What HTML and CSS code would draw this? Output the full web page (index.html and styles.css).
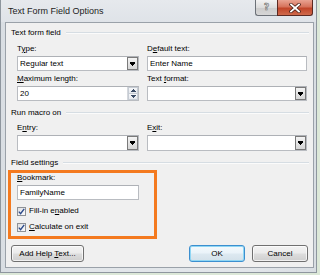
FILE: index.html
```html
<!DOCTYPE html>
<html>
<head>
<meta charset="utf-8">
<title>Text Form Field Options</title>
<link rel="stylesheet" href="styles.css">
</head>
<body>
<div class="window">
  <div class="titlebar">
    <span class="title">Text Form Field Options</span>
    <div class="caption">
      <div class="cap-btn cap-help"><span class="help-glyph">?</span></div>
      <div class="cap-btn cap-close">
        <svg width="12" height="10" viewBox="0 0 12 10"><path d="M2 1.5L10 8.5M10 1.5L2 8.5" stroke="#4a2018" stroke-width="3.4" stroke-linecap="square"/><path d="M2 1.5L10 8.5M10 1.5L2 8.5" stroke="#ffffff" stroke-width="1.8" stroke-linecap="square"/></svg>
      </div>
    </div>
  </div>
  <div class="client">
    <div class="group-head"><span>Text form field</span><i class="rule"></i></div>
    <div class="grid grid-top">
      <div class="field">
        <label class="lbl">T<u>y</u>pe:</label>
        <div class="box combo"><span class="val">Regular text</span><span class="drop"><svg width="5" height="4" viewBox="0 0 5 4"><path d="M0 0h5v2H0zM1 2h3v1H1zM2 3h1v1H2z" fill="#000"/></svg></span></div>
      </div>
      <div class="field">
        <label class="lbl">D<u>e</u>fault text:</label>
        <div class="box"><span class="val">Enter Name</span></div>
      </div>
      <div class="field">
        <label class="lbl"><u>M</u>aximum length:</label>
        <div class="box combo"><span class="val">20</span><span class="spin"><span class="sp-up"><svg width="5" height="3" viewBox="0 0 5 3"><path d="M2 0h1v1H2zM1 1h3v1H1zM0 2h5v1H0z" fill="#3b4c66"/></svg></span><span class="sp-dn"><svg width="5" height="3" viewBox="0 0 5 3"><path d="M0 0h5v1H0zM1 1h3v1H1zM2 2h1v1H2z" fill="#3b4c66"/></svg></span></span></div>
      </div>
      <div class="field">
        <label class="lbl">Text <u>f</u>ormat:</label>
        <div class="box combo"><span class="val"></span><span class="drop"><svg width="5" height="4" viewBox="0 0 5 4"><path d="M0 0h5v2H0zM1 2h3v1H1zM2 3h1v1H2z" fill="#000"/></svg></span></div>
      </div>
    </div>

    <div class="group-head gh-macro"><span>Run macro on</span><i class="rule"></i></div>
    <div class="grid grid-macro">
      <div class="field">
        <label class="lbl">E<u>n</u>try:</label>
        <div class="box combo tall"><span class="val"></span><span class="drop"><svg width="5" height="4" viewBox="0 0 5 4"><path d="M0 0h5v2H0zM1 2h3v1H1zM2 3h1v1H2z" fill="#000"/></svg></span></div>
      </div>
      <div class="field">
        <label class="lbl">E<u>x</u>it:</label>
        <div class="box combo tall"><span class="val"></span><span class="drop"><svg width="5" height="4" viewBox="0 0 5 4"><path d="M0 0h5v2H0zM1 2h3v1H1zM2 3h1v1H2z" fill="#000"/></svg></span></div>
      </div>
    </div>

    <div class="group-head gh-settings"><span>Field settings</span><i class="rule"></i></div>
    <div class="highlight">
      <label class="lbl"><u>B</u>ookmark:</label>
      <div class="box bookmark"><span class="val">FamilyName</span></div>
      <div class="check first">
        <span class="cb"><svg width="7" height="7" viewBox="0 0 7 7"><path d="M0.8 3.6L2.6 5.6L6.2 0.8" fill="none" stroke="#2c4a8a" stroke-width="1.4"/></svg></span>
        <span>Fill-in e<u>n</u>abled</span>
      </div>
      <div class="check">
        <span class="cb"><svg width="7" height="7" viewBox="0 0 7 7"><path d="M0.8 3.6L2.6 5.6L6.2 0.8" fill="none" stroke="#2c4a8a" stroke-width="1.4"/></svg></span>
        <span><u>C</u>alculate on exit</span>
      </div>
    </div>

    <div class="buttons">
      <button class="btn help-btn">Add Help <u>T</u>ext...</button>
      <button class="btn ok">OK</button>
      <button class="btn cancel">Cancel</button>
    </div>
  </div>
</div>
</body>
</html>
```
FILE: styles.css
```css
* { box-sizing: border-box; margin: 0; padding: 0; }
html, body { width: 320px; height: 275px; overflow: hidden; }
body {
  background: #dce8d8;
  font-family: "Liberation Sans", Arial, sans-serif;
  font-size: 8px;
  line-height: 10px;
  color: #000;
}
u { text-decoration: underline; text-underline-offset: 1px; }

.window {
  width: 317px;
  height: 273px;
  background: linear-gradient(90deg, #d9dee3, #e2e6ea 20%, #e2e6ea 80%, #d9dee3);
  border: 1px solid #8e969e;
  border-top: none;
  padding: 0 2px 4px 4px;
  display: flex;
  flex-direction: column;
}

.titlebar {
  height: 22px;
  display: flex;
  align-items: flex-start;
  background: linear-gradient(#e6e9ed, #dfe3e8);
  margin: 0 -2px 0 -4px;
  padding: 0 3px 0 6px;
}
.title {
  font-size: 9px;
  line-height: 22px;
  color: #1c1c1c;
  padding-left: 1px;
}
.caption { margin-left: auto; display: flex; }
.cap-btn {
  height: 16px;
  border: 1px solid #6c7178;
  border-top: none;
  display: flex;
  align-items: center;
  justify-content: center;
}
.cap-help {
  width: 22px;
  border-radius: 0 0 0 3px;
  border-right: none;
  background: linear-gradient(#f2f2f2, #dcdcdc 50%, #cbcbcb 51%, #d6d6d6);
}
.help-glyph {
  font-family: "DejaVu Sans", sans-serif;
  font-size: 9px;
  line-height: 9px;
  font-weight: bold;
  color: #f4f4f4;
  -webkit-text-stroke: 0.6px #6a6a6a;
}
.cap-close {
  width: 36px;
  border-color: #5c2a22;
  border-radius: 0 0 3px 0;
  background: linear-gradient(#e9a392, #d6735c 45%, #c14529 55%, #cf6a4c);
}

.client {
  flex: 1;
  background: #f0f0f0;
  border: 1px solid #9aa1a9;
  display: flex;
  flex-direction: column;
}

.group-head {
  display: flex;
  align-items: center;
  margin: 5px 4px 0 5px;
  height: 10px;
}
.group-head span { white-space: nowrap; }
.rule {
  flex: 1;
  margin-left: 5px;
  border-top: 1px solid #d6dde3;
  border-bottom: 1px solid #fbfbfb;
}
.gh-macro { margin-top: 7px; }
.gh-settings { margin-top: 7px; }

.grid {
  display: grid;
  grid-template-columns: 122px 160px;
  column-gap: 8px;
  row-gap: 3px;
  margin-left: 11px;
}
.grid-top { margin-top: 6px; }
.grid-macro { margin-top: 5px; }

.field { display: flex; flex-direction: column; }
.lbl { display: block; height: 10px; white-space: nowrap; }

.box {
  margin-top: 2px;
  height: 15px;
  background: #fff;
  border: 1px solid #b9bcc1;
  border-top-color: #aeb1b6;
  display: flex;
  align-items: stretch;
}
.box.tall { height: 16px; }
.val {
  flex: 1;
  padding-left: 2px;
  line-height: 13px;
  white-space: nowrap;
}
.tall .val { line-height: 14px; }

.drop {
  width: 11px;
  border: 1px solid #7a7a7a;
  background: linear-gradient(#f4f4f4, #e4e4e4 50%, #d6d6d6);
  display: flex;
  align-items: center;
  justify-content: center;
}
.spin {
  width: 11px;
  display: flex;
  flex-direction: column;
  border-left: 1px solid #d4d7dc;
}
.sp-up, .sp-dn {
  flex: 1;
  display: flex;
  align-items: center;
  justify-content: center;
  background: linear-gradient(#f6f7f9, #e6e9ee);
  border: 1px solid #c6ccd4;
}
.sp-dn { border-top: none; }

.highlight {
  margin: 2px 0 0 2px;
  width: 149px;
  border: 3px solid #f47a1f;
  padding: 0 0 4px 6px;
}
.bookmark { width: 122px; }

.check {
  display: flex;
  align-items: center;
  height: 10px;
  margin-top: 6px;
  white-space: nowrap;
}
.check.first { margin-top: 6px; }
.cb {
  width: 9px;
  height: 9px;
  margin-right: 3px;
  border: 1px solid #8e9196;
  background: linear-gradient(135deg, #dedfe2, #fbfbfc);
  display: flex;
  align-items: center;
  justify-content: center;
}

.buttons {
  display: flex;
  margin: 6px 5px 0 5px;
}
.btn {
  font-family: "Liberation Sans", Arial, sans-serif;
  font-size: 8px;
  line-height: 15px;
  height: 17px;
  width: 56px;
  color: #000;
  border: 1px solid #707070;
  border-radius: 3px;
  background: linear-gradient(#f3f3f3, #ebebeb 48%, #dddddd 52%, #cfcfcf);
  box-shadow: inset 0 0 0 1px rgba(255,255,255,0.7);
}
.help-btn { width: 73px; }
.ok {
  margin-left: auto;
  border-color: #3c8fcf;
  box-shadow: inset 0 0 0 1px #8fd6f4;
  background: linear-gradient(#f4f9fc, #eaf3f9 48%, #dde9f1 52%, #d3e1ea);
}
.cancel { margin-left: 7px; }
```
